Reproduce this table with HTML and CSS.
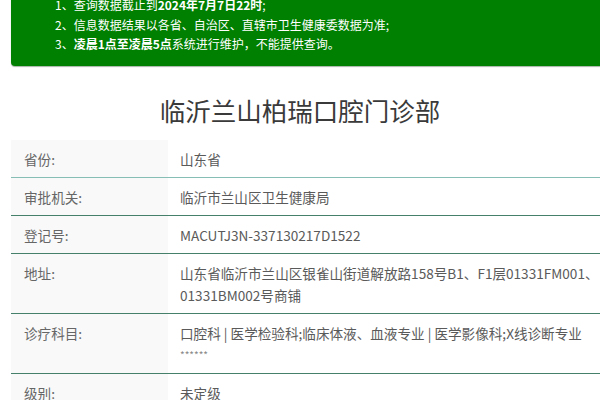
FILE: index.html
```html
<!DOCTYPE html>
<html lang="zh-CN">
<head>
<meta charset="utf-8">
<title>临沂兰山柏瑞口腔门诊部</title>
<link rel="stylesheet" href="styles.css">
</head>
<body>
<div class="notice">
  <p>1、查询数据截止到<b>2024年7月7日22时</b>;</p>
  <p>2、信息数据结果以各省、自治区、直辖市卫生健康委数据为准;</p>
  <p>3、<b>凌晨1点至凌晨5点</b>系统进行维护，不能提供查询。</p>
</div>
<h1 class="title">临沂兰山柏瑞口腔门诊部</h1>
<div class="info">
  <div class="row first"><div class="label">省份:</div><div class="value">山东省</div></div>
  <div class="row"><div class="label">审批机关:</div><div class="value">临沂市兰山区卫生健康局</div></div>
  <div class="row"><div class="label">登记号:</div><div class="value">MACUTJ3N-337130217D1522</div></div>
  <div class="row"><div class="label">地址:</div><div class="value">山东省临沂市兰山区银雀山街道解放路158号B1、F1层01331FM001、01331BM002号商铺</div></div>
  <div class="row"><div class="label">诊疗科目:</div><div class="value">口腔科 | 医学检验科;临床体液、血液专业 | 医学影像科;X线诊断专业<span class="stars">******</span></div></div>
  <div class="row"><div class="label">级别:</div><div class="value">未定级</div></div>
</div>
</body>
</html>
```
FILE: styles.css
```css
html, body {
  margin: 0;
  padding: 0;
  overflow: hidden;
  background: #fff;
}
body {
  font-family: "Noto Sans CJK SC", "Noto Sans", sans-serif;
  color: #555;
}
.notice {
  margin: -15px -30px 0 11px;
  padding: 10px 0 12.5px 44px;
  background: #008000;
  color: #fff;
  border-radius: 4px;
  box-shadow: 0 1px 1px rgba(0, 40, 0, 0.35);
  font-size: 12px;
  line-height: 19.5px;
}
.notice p {
  margin: 0;
}
.notice b {
  font-weight: 700;
}
.title {
  margin: 27px 0 13px;
  text-align: center;
  font-size: 25.5px;
  line-height: 34px;
  font-weight: 400;
  color: #3a3a3a;
}
.info {
  margin: 0 -30px 0 11px;
  font-size: 13.6px;
  line-height: 22px;
}
.row {
  display: grid;
  grid-template-columns: 157px 1fr;
  border-bottom: 1px solid #44806a;
}
.row.first {
  border-bottom-color: #86bdb4;
}
.label {
  background: #f9f9f9;
  color: #666;
  padding: 7.5px 0 7.5px 13px;
}
.value {
  padding: 7.5px 0 7.5px 12px;
  color: #5a5a5a;
}
.stars {
  display: block;
  font-size: 10px;
  line-height: 22px;
  color: #888;
}
```
